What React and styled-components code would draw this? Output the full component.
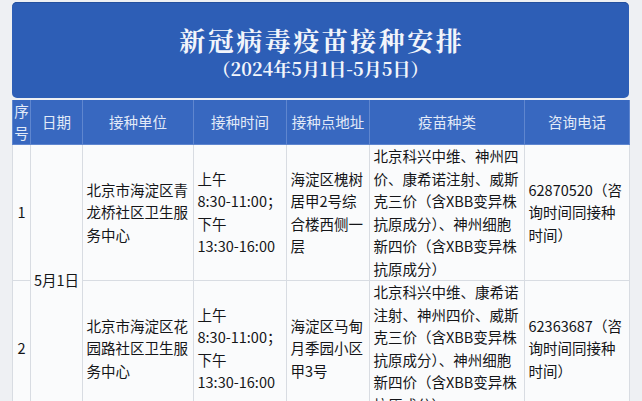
import React from "react";
import styled, { createGlobalStyle } from "styled-components";

const Global = createGlobalStyle`
  html, body { margin: 0; padding: 0; background: #eef0f3; }
  body { font-family: "Noto Sans CJK SC", "Noto Sans", sans-serif; }
`;

const Page = styled.div`
  width: 642px;
  padding: 2px 13px 0 12px;
  box-sizing: border-box;
  display: flex;
  flex-direction: column;
  gap: 2px;
`;

const Banner = styled.header`
  background: #2d5eb6;
  border-radius: 5px;
  padding: 22px 0 18px;
  display: flex;
  flex-direction: column;
  align-items: center;
  color: #f2f5fb;
  box-shadow: inset 0 1px 0 #24509e;
`;

const Title = styled.h1`
  margin: 0;
  font-family: "Noto Serif CJK SC", "Noto Sans CJK SC", serif;
  font-size: 26px;
  line-height: 32px;
  font-weight: 700;
  letter-spacing: 2.5px;
  padding-left: 2.5px;
`;

const Subtitle = styled.div`
  font-family: "Noto Serif CJK SC", "Noto Sans CJK SC", serif;
  font-size: 18px;
  line-height: 24px;
  font-weight: 700;
`;

const Table = styled.table`
  width: 617px;
  table-layout: fixed;
  border-collapse: collapse;
  background: #fafbfc;
`;

const HeadCell = styled.th`
  background: #3868c0;
  color: #e2eaf8;
  font-weight: 400;
  font-size: 14.5px;
  line-height: ${(p) => (p.$stack ? "22px" : "20px")};
  height: 43px;
  padding: 0;
  border: 1px solid #5f86cf;
  border-top: none;
  text-align: center;
  vertical-align: middle;
`;

const Cell = styled.td`
  color: #141518;
  font-size: 14.5px;
  line-height: 22.5px;
  padding: 0 2px 0 ${(p) => (p.$center ? "2px" : "3.5px")};
  border: 1px solid #d8dce2;
  text-align: ${(p) => (p.$center ? "center" : "left")};
  vertical-align: middle;
  white-space: nowrap;
  overflow: hidden;
`;

const Line = styled.span`
  display: block;
`;

const widths = [18, 52, 111, 93, 83, 155, 105];
const heads = ["序号", "日期", "接种单位", "接种时间", "接种点地址", "疫苗种类", "咨询电话"];

const rows = [
  {
    no: "1",
    unit: ["北京市海淀区青", "龙桥社区卫生服", "务中心"],
    time: ["上午", "8:30-11:00；", "下午", "13:30-16:00"],
    addr: ["海淀区槐树", "居甲2号综", "合楼西侧一", "层"],
    vac: [
      "北京科兴中维、神州四",
      "价、康希诺注射、威斯",
      "克三价（含XBB变异株",
      "抗原成分）、神州细胞",
      "新四价（含XBB变异株",
      "抗原成分）",
    ],
    tel: ["62870520（咨", "询时间同接种", "时间）"],
  },
  {
    no: "2",
    unit: ["北京市海淀区花", "园路社区卫生服", "务中心"],
    time: ["上午", "8:30-11:00；", "下午", "13:30-16:00"],
    addr: ["海淀区马甸", "月季园小区", "甲3号"],
    vac: [
      "北京科兴中维、康希诺",
      "注射、神州四价、威斯",
      "克三价（含XBB变异株",
      "抗原成分）、神州细胞",
      "新四价（含XBB变异株",
      "抗原成分）",
    ],
    tel: ["62363687（咨", "询时间同接种", "时间）"],
  },
];

const Lines = ({ items }) => items.map((t, i) => <Line key={i}>{t}</Line>);

export default function App() {
  return (
    <>
      <Global />
      <Page>
        <Banner>
          <Title>新冠病毒疫苗接种安排</Title>
          <Subtitle>（2024年5月1日-5月5日）</Subtitle>
        </Banner>
        <Table>
          <colgroup>
            {widths.map((w, i) => (
              <col key={i} style={{ width: w }} />
            ))}
          </colgroup>
          <thead>
            <tr>
              <HeadCell $stack>
                <Line>序</Line>
                <Line>号</Line>
              </HeadCell>
              {heads.slice(1).map((h) => (
                <HeadCell key={h}>{h}</HeadCell>
              ))}
            </tr>
          </thead>
          <tbody>
            {rows.map((r, i) => (
              <tr key={r.no}>
                <Cell $center>{r.no}</Cell>
                {i === 0 && (
                  <Cell $center rowSpan={2}>
                    5月1日
                  </Cell>
                )}
                <Cell><Lines items={r.unit} /></Cell>
                <Cell><Lines items={r.time} /></Cell>
                <Cell><Lines items={r.addr} /></Cell>
                <Cell><Lines items={r.vac} /></Cell>
                <Cell><Lines items={r.tel} /></Cell>
              </tr>
            ))}
          </tbody>
        </Table>
      </Page>
    </>
  );
}
